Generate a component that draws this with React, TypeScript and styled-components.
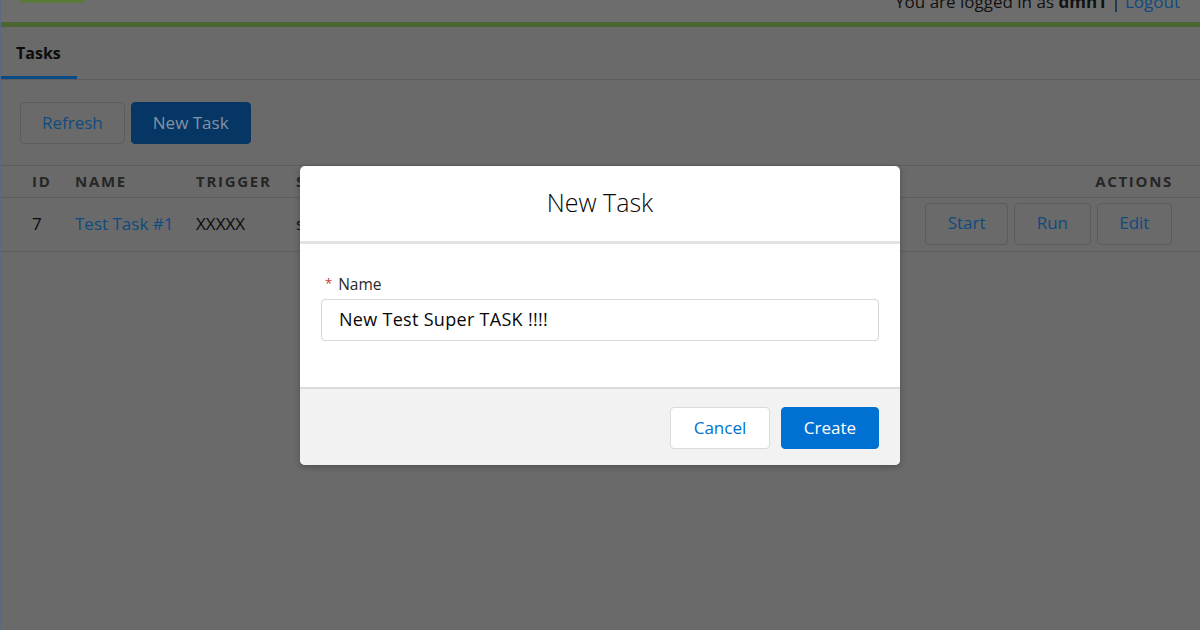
import React from "react";
import styled, { createGlobalStyle } from "styled-components";

const Global = createGlobalStyle`
  html, body { margin: 0; padding: 0; }
  body {
    width: 1200px;
    height: 630px;
    overflow: hidden;
    font-family: "Open Sans", "Liberation Sans", sans-serif;
    background: #6a6a6a;
  }
  * { box-sizing: border-box; }
`;

const Page = styled.div`
  position: relative;
  width: 1200px;
  height: 630px;
  background: #6a6a6a;
  overflow: hidden;

  &::after {
    content: "";
    position: absolute;
    left: 0;
    top: 0;
    bottom: 0;
    width: 1px;
    background: #5a6880;
    z-index: 2;
  }
`;

const Header = styled.header`
  height: 27px;
  background: #6d6d6d;
  border-bottom: 5px solid #4a6632;
  display: flex;
  justify-content: space-between;
  align-items: flex-start;
  padding: 0 20px;
`;

const Logo = styled.div`
  width: 65px;
  height: 3px;
  background: #5a7a3a;
  border-radius: 0 0 4px 4px;
`;

const UserInfo = styled.div`
  margin-top: -9px;
  font-size: 17px;
  line-height: 22px;
  color: #111;
  white-space: nowrap;
  strong { font-weight: 700; }
`;

const LinkText = styled.span`
  color: #0f4a80;
`;

const Tabs = styled.nav`
  height: 53px;
  display: flex;
  border-bottom: 1px solid #5e5e5e;
`;

const Tab = styled.div<{ $active?: boolean }>`
  display: flex;
  align-items: center;
  padding: 2px 16px 0 16px;
  font-weight: 700;
  font-size: 16px;
  color: #0c0c0c;
  border-bottom: 3px solid ${(p) => (p.$active ? "#0a4a85" : "transparent")};
`;

const Toolbar = styled.div`
  display: flex;
  gap: 6px;
  padding: 22px 20px 21px;
`;

const PageButton = styled.button<{ $primary?: boolean }>`
  height: 42px;
  padding: 0 21px 2px;
  border-radius: 4px;
  border: 1px solid ${(p) => (p.$primary ? "#083663" : "#5c5c5c")};
  background: ${(p) => (p.$primary ? "#063663" : "transparent")};
  color: ${(p) => (p.$primary ? "#8393a6" : "#104a7e")};
  font-family: inherit;
  font-size: 17px;
`;

const Table = styled.div`
  border-top: 1px solid #5e5e5e;
`;

const Row = styled.div<{ $head?: boolean }>`
  display: grid;
  grid-template-columns: 43px 121px 100px 1fr auto;
  align-items: center;
  height: ${(p) => (p.$head ? "32px" : "54px")};
  padding: 0 28px ${(p) => (p.$head ? "1px" : "2px")} 32px;
  border-bottom: 1px solid #5e5e5e;
`;

const HeadCell = styled.div<{ $right?: boolean }>`
  font-size: 15px;
  font-weight: 700;
  letter-spacing: 1.7px;
  color: #262626;
  text-transform: uppercase;
  text-align: ${(p) => (p.$right ? "right" : "left")};
  ${(p) => (p.$right ? "margin-right: -1px;" : "")}
`;

const Cell = styled.div<{ $link?: boolean }>`
  font-size: 17px;
  color: ${(p) => (p.$link ? "#0f4a80" : "#0c0c0c")};
  white-space: nowrap;
`;

const Actions = styled.div`
  display: flex;
  gap: 6px;
`;

const ActionButton = styled.button`
  height: 42px;
  padding: 0 21.6px 2px;
  border-radius: 4px;
  border: 1px solid #5b5b5b;
  background: transparent;
  color: #0e4a7e;
  font-family: inherit;
  font-size: 17px;
`;

const Backdrop = styled.div`
  position: absolute;
  inset: 0;
  display: flex;
  align-items: center;
  justify-content: center;
`;

const Modal = styled.div`
  width: 600px;
  background: #fff;
  border-radius: 5px;
  overflow: hidden;
  box-shadow: 0 2px 6px rgba(0, 0, 0, 0.25);
`;

const ModalHeader = styled.div`
  height: 78px;
  display: flex;
  align-items: center;
  justify-content: center;
  border-bottom: 3px solid #e3e3e3;
  padding-bottom: 2px;
`;

const Title = styled.h2`
  margin: 0;
  font-size: 25px;
  font-weight: 300;
  color: #080707;
`;

const ModalBody = styled.div`
  padding: 29px 21px 46px;
`;

const Label = styled.label`
  display: block;
  font-size: 15.5px;
  color: #2b2826;
  line-height: 20px;
  margin-bottom: 5px;
  padding-left: 4px;
`;

const Required = styled.abbr`
  color: #c23934;
  text-decoration: none;
  margin-right: 6px;
  font-size: 13px;
  vertical-align: 2px;
`;

const Input = styled.input`
  display: block;
  width: 100%;
  height: 42px;
  padding: 0 17px 2px;
  border: 1px solid #d8d8d8;
  border-radius: 4px;
  font-family: inherit;
  font-size: 18px;
  letter-spacing: 0.3px;
  color: #080707;
  outline: none;
`;

const ModalFooter = styled.div`
  background: #f3f2f2;
  border-top: 2px solid #dddbda;
  padding: 18px 21px 16px;
  display: flex;
  justify-content: flex-end;
  gap: 11px;
`;

const ModalButton = styled.button<{ $brand?: boolean }>`
  height: 42px;
  padding-bottom: 2px;
  min-width: ${(p) => (p.$brand ? "98px" : "100px")};
  border-radius: 4px;
  border: 1px solid ${(p) => (p.$brand ? "#0070d2" : "#dddbda")};
  background: ${(p) => (p.$brand ? "#0070d2" : "#fff")};
  color: ${(p) => (p.$brand ? "#fff" : "#0070d2")};
  font-family: inherit;
  font-size: 17px;
`;

export default function App() {
  return (
    <>
      <Global />
      <Page>
        <Header>
          <Logo />
          <UserInfo>
            You are logged in as <strong>dmn1</strong> | <LinkText>Logout</LinkText>
          </UserInfo>
        </Header>
        <Tabs>
          <Tab $active>Tasks</Tab>
        </Tabs>
        <Toolbar>
          <PageButton>Refresh</PageButton>
          <PageButton $primary>New Task</PageButton>
        </Toolbar>
        <Table>
          <Row $head>
            <HeadCell>ID</HeadCell>
            <HeadCell>Name</HeadCell>
            <HeadCell>Trigger</HeadCell>
            <HeadCell>Status</HeadCell>
            <HeadCell $right>Actions</HeadCell>
          </Row>
          <Row>
            <Cell>7</Cell>
            <Cell $link>Test Task #1</Cell>
            <Cell>XXXXX</Cell>
            <Cell>stopped</Cell>
            <Actions>
              <ActionButton>Start</ActionButton>
              <ActionButton>Run</ActionButton>
              <ActionButton>Edit</ActionButton>
            </Actions>
          </Row>
        </Table>
        <Backdrop>
          <Modal>
            <ModalHeader>
              <Title>New Task</Title>
            </ModalHeader>
            <ModalBody>
              <Label>
                <Required title="required">*</Required>Name
              </Label>
              <Input defaultValue="New Test Super TASK !!!!" />
            </ModalBody>
            <ModalFooter>
              <ModalButton>Cancel</ModalButton>
              <ModalButton $brand>Create</ModalButton>
            </ModalFooter>
          </Modal>
        </Backdrop>
      </Page>
    </>
  );
}
